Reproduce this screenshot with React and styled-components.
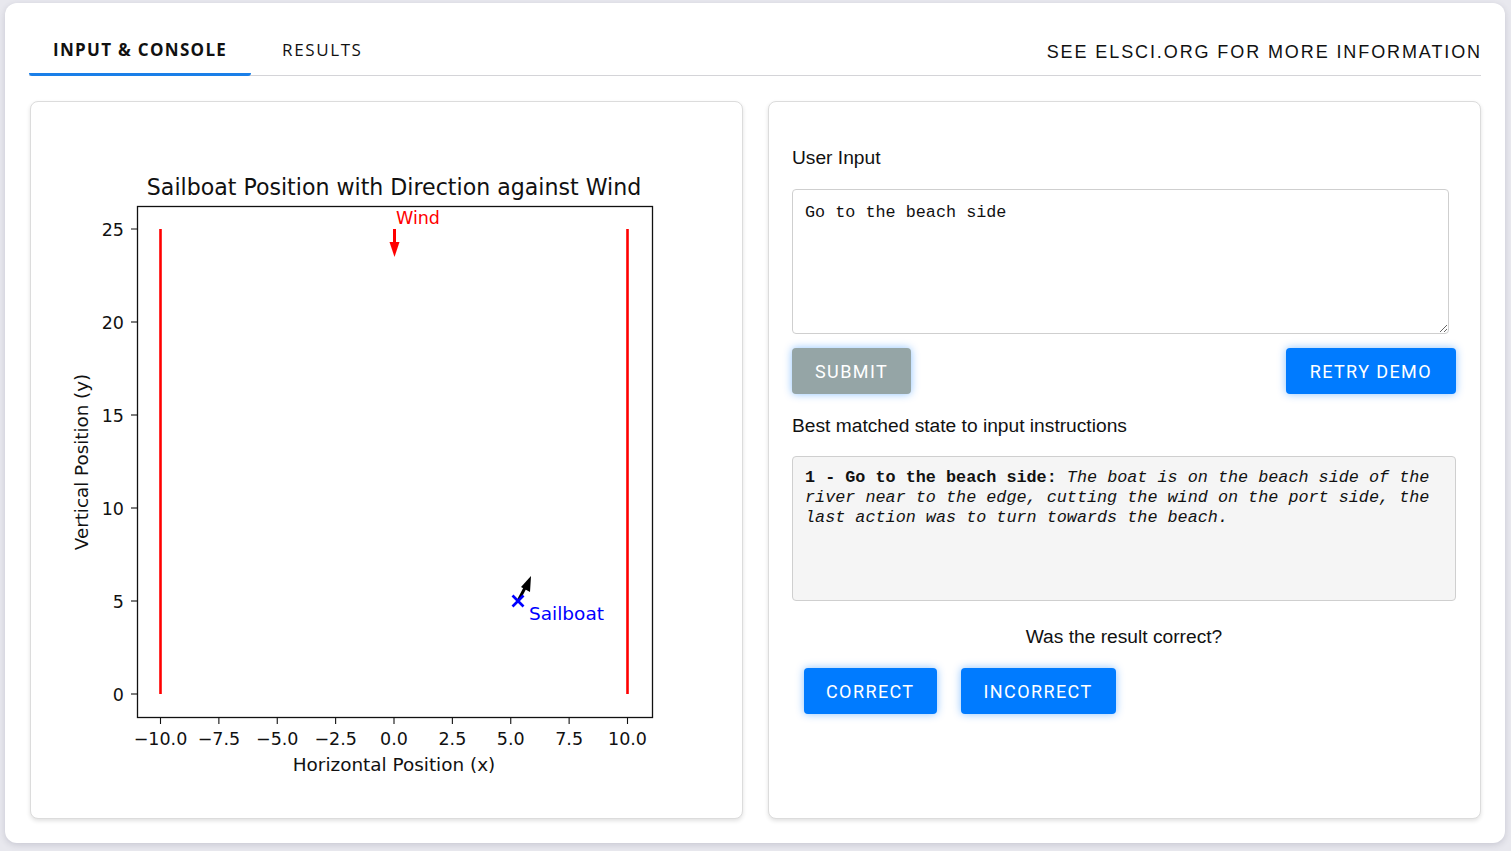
import React from "react";
import styled, { createGlobalStyle } from "styled-components";

const GlobalStyle = createGlobalStyle`
  html, body { margin: 0; padding: 0; }
  body {
    background: #e8e8ee;
    font-family: "Liberation Sans", Arial, sans-serif;
    color: #111;
  }
`;

const Page = styled.div`
  padding: 3px 6px 8px 5px;
`;

const Card = styled.div`
  background: #fff;
  border-radius: 12px;
  box-shadow: 0 2px 6px rgba(60, 60, 90, 0.18);
  padding: 24px 24px 24px 24px;
  height: 840px;
  box-sizing: border-box;
  display: flex;
  flex-direction: column;
`;

const TabBar = styled.div`
  display: flex;
  align-items: stretch;
  height: 49px;
  border-bottom: 1px solid #d4d4d8;
`;

const Tab = styled.div`
  display: flex;
  align-items: center;
  padding: 0 24px 2px ${(p) => (p.$active ? 24 : 31)}px;
  font-family: "Open Sans", "Noto Sans", sans-serif;
  font-size: 17px;
  font-weight: ${(p) => (p.$active ? 700 : 400)};
  letter-spacing: ${(p) => (p.$active ? 1.3 : 1.6)}px;
  color: #111;
  border-bottom: 3px solid ${(p) => (p.$active ? "#1a7fe8" : "transparent")};
  border-radius: 0 0 3px 3px;
  margin-bottom: -1px;
`;

const InfoLink = styled.div`
  margin-left: auto;
  display: flex;
  align-items: center;
  padding-top: 2px;
  font-family: "Liberation Sans", Arial, sans-serif;
  font-size: 18px;
  letter-spacing: 1.9px;
  margin-right: -1px;
  color: #111;
`;

const Panels = styled.div`
  display: grid;
  grid-template-columns: 1fr 1fr;
  gap: 25px;
  margin-top: 25px;
  flex: 1;
  padding-left: 1px;
`;

const Panel = styled.div`
  border: 1px solid #dcdcdc;
  border-radius: 8px;
  box-shadow: 0 2px 4px rgba(0, 0, 0, 0.12);
  background: #fff;
  box-sizing: border-box;
  overflow: hidden;
`;

const ChartPanel = styled(Panel)`
  display: flex;
`;

const FormPanel = styled(Panel)`
  padding: 45px 24px 24px 23px;
  display: flex;
  flex-direction: column;
`;

const Label = styled.div`
  font-size: 19.2px;
  line-height: 22px;
  color: #111;
`;

const TextArea = styled.textarea`
  margin-top: 20px;
  width: calc(100% - 7px);
  height: 145px;
  box-sizing: border-box;
  border: 1px solid #cfcfcf;
  border-radius: 4px;
  padding: 13px 12px 11px;
  font-family: "Liberation Mono", "DejaVu Sans Mono", monospace;
  font-size: 16.8px;
  line-height: 20px;
  color: #111;
  resize: vertical;
  outline: none;
`;

const ButtonRow = styled.div`
  display: flex;
  justify-content: ${(p) => p.$justify || "flex-start"};
  margin-top: ${(p) => p.$top || 0}px;
`;

const Button = styled.button`
  height: 46px;
  padding: 0 ${(p) => p.$pad || 24}px;
  margin: 0 ${(p) => p.$margin || 0}px;
  border: none;
  border-radius: 4px;
  background: ${(p) => (p.$gray ? "#95a5a6" : "#007bff")};
  color: #fff;
  font-family: Roboto, "Noto Sans", sans-serif;
  font-size: 18px;
  letter-spacing: 1.4px;
  box-shadow: 0 0 8px rgba(0, 123, 255, 0.45);
  cursor: pointer;
`;

const ResultBox = styled.div`
  margin-top: 19px;
  height: 145px;
  box-sizing: border-box;
  background: #f5f5f5;
  border: 1px solid #cfcfcf;
  border-radius: 4px;
  padding: 11px 12px 9px;
  font-family: "Liberation Mono", "DejaVu Sans Mono", monospace;
  font-size: 16.8px;
  line-height: 20px;
  color: #111;
`;

const Strong = styled.b`
  font-weight: 700;
`;

const Em = styled.i`
  font-style: italic;
`;

const Question = styled(Label)`
  text-align: center;
  margin-top: 25px;
`;

const BestLabel = styled(Label)`
  margin-top: 21px;
`;

const ChartSvg = styled.svg`
  display: block;
  font-family: "DejaVu Sans", sans-serif;
`;

const X0 = 394;
const XS = 23.35;
const Y0 = 694;
const YS = 18.6;
const px = (v) => X0 + v * XS;
const py = (v) => Y0 - v * YS;

const xTicks = [-10, -7.5, -5, -2.5, 0, 2.5, 5, 7.5, 10];
const yTicks = [0, 5, 10, 15, 20, 25];
const fmtX = (v) => (v < 0 ? "\u2212" + Math.abs(v).toFixed(1) : v.toFixed(1));

function Chart() {
  return (
    <ChartSvg width="710" height="716" viewBox="31 102 710 716">
      <text x="394" y="195" fontSize="22.1" textAnchor="middle" fill="#111">
        Sailboat Position with Direction against Wind
      </text>
      <rect x="137.5" y="206.5" width="515" height="511" fill="none" stroke="#111" strokeWidth="1.3" />
      {yTicks.map((v) => (
        <g key={"y" + v}>
          <line x1="131" x2="137.5" y1={py(v)} y2={py(v)} stroke="#111" strokeWidth="1.1" />
          <text x="124" y={py(v) + 6.5} fontSize="17.5" textAnchor="end" fill="#111">
            {v}
          </text>
        </g>
      ))}
      {xTicks.map((v) => (
        <g key={"x" + v}>
          <line x1={px(v)} x2={px(v)} y1="717.5" y2="724" stroke="#111" strokeWidth="1.1" />
          <text x={px(v)} y="745" fontSize="17.5" textAnchor="middle" fill="#111">
            {fmtX(v)}
          </text>
        </g>
      ))}
      <text x="394" y="771" fontSize="18.4" textAnchor="middle" fill="#111">
        Horizontal Position (x)
      </text>
      <text
        x="0"
        y="0"
        fontSize="18.3"
        textAnchor="middle"
        fill="#111"
        transform="translate(88 462) rotate(-90)"
      >
        Vertical Position (y)
      </text>
      <line x1={px(-10)} x2={px(-10)} y1={py(25)} y2={py(0)} stroke="#ff0000" strokeWidth="2.6" />
      <line x1={px(10)} x2={px(10)} y1={py(25)} y2={py(0)} stroke="#ff0000" strokeWidth="2.6" />
      <line x1="394.5" x2="394.5" y1="229" y2="244" stroke="#ff0000" strokeWidth="3" />
      <polygon points="389.5,242 399.5,242 394.5,257" fill="#ff0000" />
      <text x="396" y="224" fontSize="17.5" fill="#ff0000">
        Wind
      </text>
      <line x1="518" y1="601" x2="526" y2="586" stroke="#000" strokeWidth="3" />
      <polygon points="531,576 530,592 521,587" fill="#000" />
      <line x1="512.5" y1="595.5" x2="523.5" y2="606.5" stroke="#0000ff" strokeWidth="2.6" />
      <line x1="523.5" y1="595.5" x2="512.5" y2="606.5" stroke="#0000ff" strokeWidth="2.6" />
      <text x="529" y="620" fontSize="18.5" fill="#0000ff">
        Sailboat
      </text>
    </ChartSvg>
  );
}

export default function App() {
  return (
    <>
      <GlobalStyle />
      <Page>
        <Card>
          <TabBar>
            <Tab $active>INPUT &amp; CONSOLE</Tab>
            <Tab>RESULTS</Tab>
            <InfoLink>SEE ELSCI.ORG FOR MORE INFORMATION</InfoLink>
          </TabBar>
          <Panels>
            <ChartPanel>
              <Chart />
            </ChartPanel>
            <FormPanel>
              <Label>User Input</Label>
              <TextArea defaultValue="Go to the beach side" />
              <ButtonRow $justify="space-between" $top={14}>
                <Button $gray $pad={23}>SUBMIT</Button>
                <Button $pad={24}>RETRY DEMO</Button>
              </ButtonRow>
              <BestLabel>Best matched state to input instructions</BestLabel>
              <ResultBox>
                <Strong>1 - Go to the beach side:</Strong>{" "}
                <Em>
                  The boat is on the beach side of the river near to the edge, cutting the wind on the
                  port side, the last action was to turn towards the beach.
                </Em>
              </ResultBox>
              <Question>Was the result correct?</Question>
              <ButtonRow $top={20}>
                <Button $margin={12} $pad={22}>CORRECT</Button>
                <Button $margin={12} $pad={23}>INCORRECT</Button>
              </ButtonRow>
            </FormPanel>
          </Panels>
        </Card>
      </Page>
    </>
  );
}
